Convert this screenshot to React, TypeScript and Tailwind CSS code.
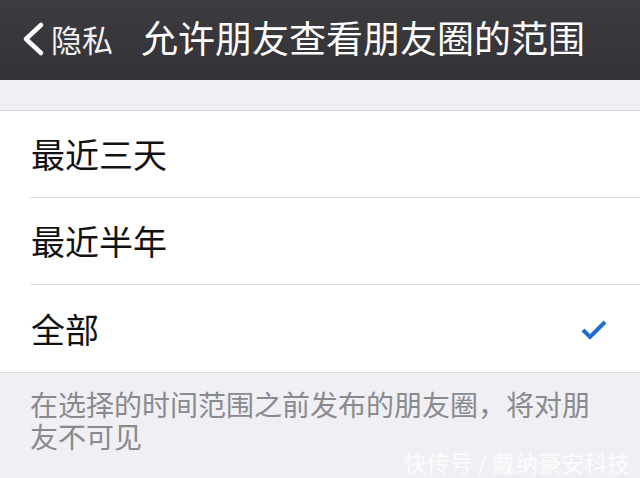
import React from "react";

const font = { fontFamily: '"Noto Sans CJK SC", "Noto Sans", sans-serif' };

function Row({ label, checked, last }: { label: string; checked?: boolean; last?: boolean }) {
  return (
    <div className="pl-[30px] bg-white">
      <div className={`h-[87px] flex items-center justify-between pr-[32px] ${last ? "" : "border-b border-[#dcdcdf]"}`}>
        <span className="text-[34px] leading-none text-[#111] pl-[1px]">{label}</span>
        {checked && (
          <svg width="28" height="24" viewBox="0 0 28 24">
            <path d="M3 13 L10 20 L25 5" fill="none" stroke="#1d6fcf" strokeWidth="4" strokeLinecap="butt" strokeLinejoin="miter" />
          </svg>
        )}
      </div>
    </div>
  );
}

export default function App() {
  return (
    <div className="w-[640px] h-[478px] overflow-hidden bg-[#efeff4] relative" style={font}>
      <div className="h-[80px] bg-gradient-to-b from-[#3c3c40] to-[#333337] flex items-center text-white">
        <svg width="26" height="36" viewBox="0 0 26 36" className="ml-[20px] mt-[-3px]">
          <path d="M21 4 L6 18 L21 32" fill="none" stroke="white" strokeWidth="4.5" strokeLinecap="round" strokeLinejoin="round" />
        </svg>
        <span className="text-[31px] leading-none ml-[5px] mt-[-3px] text-[#f2f2f2]">隐私</span>
        <span className="text-[37px] leading-none ml-[28px] mt-[-5px] font-normal">允许朋友查看朋友圈的范围</span>
      </div>
      <div className="h-[30px]" />
      <div className="border-t border-b border-[#d9d9dc] bg-white">
        <Row label="最近三天" />
        <Row label="最近半年" />
        <Row label="全部" checked last />
      </div>
      <p className="px-[30px] pt-[15px] text-[28px] leading-[32px] text-[#8a8a8e]">
        在选择的时间范围之前发布的朋友圈，将对朋友不可见
      </p>
      <div className="absolute right-[10px] bottom-[4px] text-[23px] leading-[24px] text-white/80">
        快传号 / 戴纳豪安科技
      </div>
    </div>
  );
}
